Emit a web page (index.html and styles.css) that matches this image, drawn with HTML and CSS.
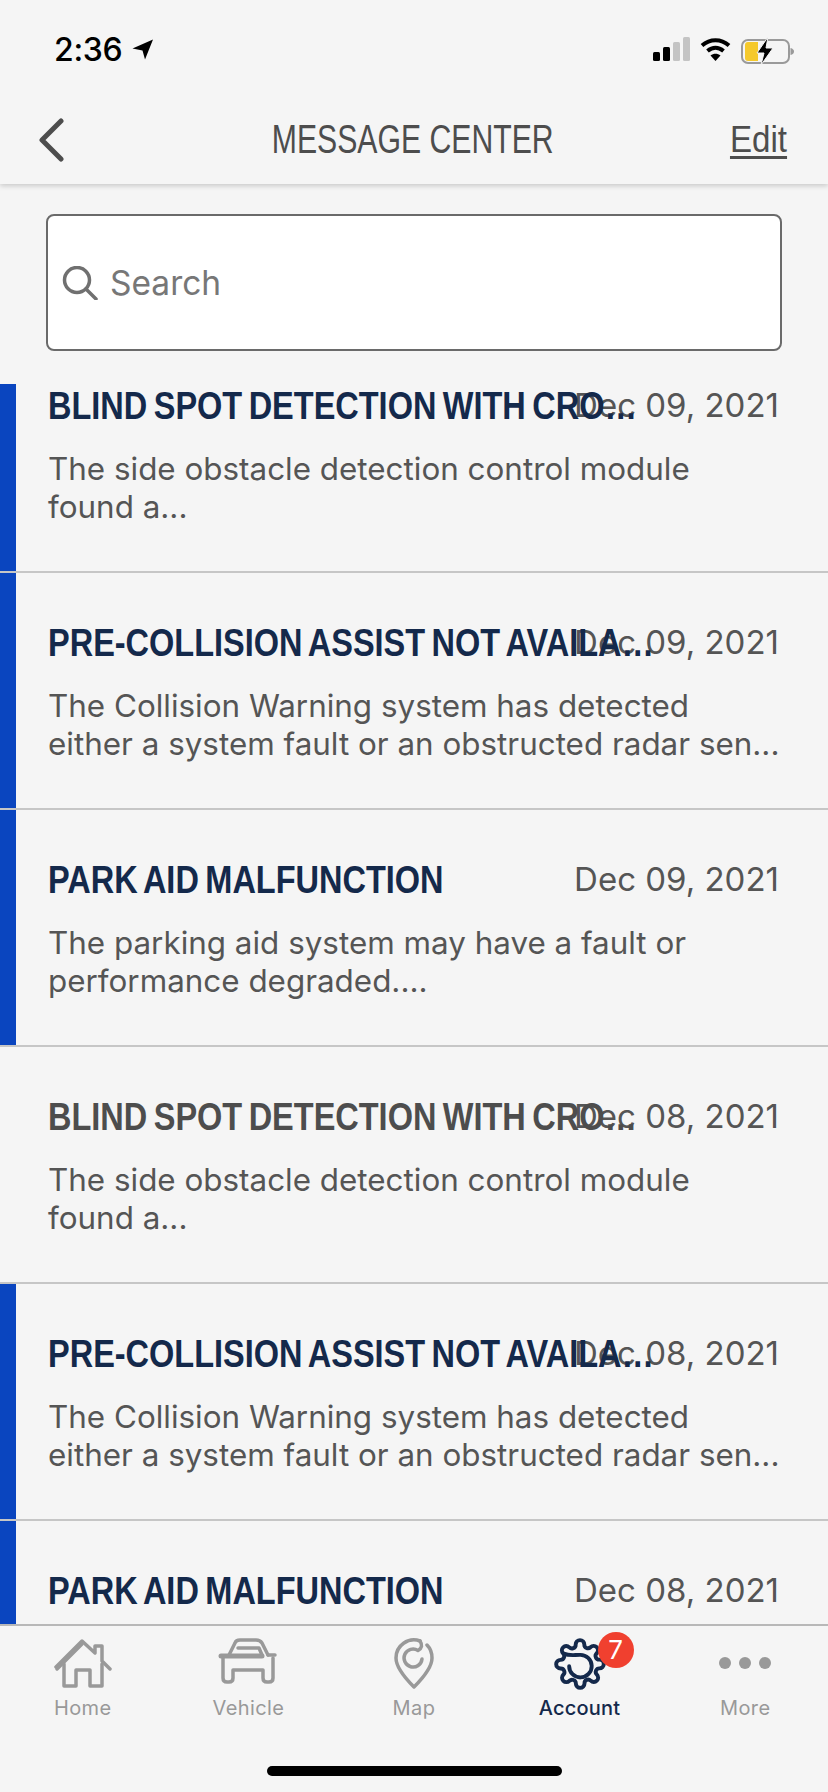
FILE: index.html
```html
<!DOCTYPE html>
<html lang="en">
<head>
  <meta charset="UTF-8" />
  <title>Message Center</title>
  <meta name="viewport" content="width=device-width, initial-scale=1.0" />
  <link rel="stylesheet" href="styles.css">
</head>
<body>
  <div class="screen">
    <div class="statusbar">
      <div class="status-left">
        <span class="clock">2:36</span>
        <svg class="location" width="22" height="21" viewBox="0 0 22 21"><path d="M21 0.5 13 20.5 10.5 11.5 0.5 9.5z" fill="#000"/></svg>
      </div>
      <div class="status-right">
        <svg width="37" height="24" viewBox="0 0 37 24">
          <rect x="0" y="15" width="7" height="9" rx="1.5" fill="#000"/>
          <rect x="10" y="10" width="7" height="14" rx="1.5" fill="#000"/>
          <rect x="20" y="5" width="7" height="19" rx="1.5" fill="#c4c4c4"/>
          <rect x="30" y="0" width="7" height="24" rx="1.5" fill="#c4c4c4"/>
        </svg>
        <svg width="31" height="24" viewBox="0 0 31 24" fill="none" stroke="#000" stroke-width="4">
          <path d="M2 8.5C10 1.5 21 1.5 29 8.5"/>
          <path d="M7.5 14C12.5 9.7 18.5 9.7 23.5 14"/>
          <path d="M15.5 24 10.5 18.5C13.5 16.3 17.5 16.3 20.5 18.5z" fill="#000" stroke="none"/>
        </svg>
        <svg width="54" height="28" viewBox="0 0 54 28">
          <rect x="1" y="3" width="47" height="23" rx="6" fill="none" stroke="#9a9a9a" stroke-width="2"/>
          <path d="M4 8Q4 5 7 5H17V24H7Q4 24 4 21z" fill="#f5c92c"/>
          <path d="M49.500 11Q53 12 53 14.500T49.500 18z" fill="#9a9a9a"/>
          <path d="M27 0 16 16H23L20 28 32 11H25z" fill="#000" stroke="#f5f5f5" stroke-width="1"/>
        </svg>
      </div>
    </div>

    <header class="navbar">
      <svg class="back" width="26" height="44" viewBox="0 0 26 44" fill="none" stroke="#4d4d4d" stroke-width="5" stroke-linecap="round" stroke-linejoin="round"><path d="M23 3 4 22 23 41"/></svg>
      <h1>MESSAGE CENTER</h1>
      <a class="edit" href="#">Edit</a>
    </header>

    <div class="search-wrap">
      <div class="search">
        <svg width="36" height="34" viewBox="0 0 36 34" fill="none" stroke="#707070" stroke-width="3.500" stroke-linecap="round"><circle cx="15" cy="14" r="12.500"/><path d="M24 23 34 33"/></svg>
        <span>Search</span>
      </div>
    </div>

    <div class="list-view">
      <ul class="messages">
        <li class="message unread">
          <div class="message-top">
            <div class="subject">BLIND SPOT DETECTION WITH CROSS TRAFFIC ALERT</div>
            <div class="date">Dec 09, 2021</div>
          </div>
          <p class="snippet">The side obstacle detection control module<br>found a...</p>
        </li>
        <li class="message unread">
          <div class="message-top">
            <div class="subject">PRE-COLLISION ASSIST NOT AVAILABLE</div>
            <div class="date">Dec 09, 2021</div>
          </div>
          <p class="snippet">The Collision Warning system has detected<br>either a system fault or an obstructed radar sen...</p>
        </li>
        <li class="message unread">
          <div class="message-top">
            <div class="subject">PARK AID MALFUNCTION</div>
            <div class="date">Dec 09, 2021</div>
          </div>
          <p class="snippet">The parking aid system may have a fault or<br>performance degraded....</p>
        </li>
        <li class="message">
          <div class="message-top">
            <div class="subject">BLIND SPOT DETECTION WITH CROSS TRAFFIC ALERT</div>
            <div class="date">Dec 08, 2021</div>
          </div>
          <p class="snippet">The side obstacle detection control module<br>found a...</p>
        </li>
        <li class="message unread">
          <div class="message-top">
            <div class="subject">PRE-COLLISION ASSIST NOT AVAILABLE</div>
            <div class="date">Dec 08, 2021</div>
          </div>
          <p class="snippet">The Collision Warning system has detected<br>either a system fault or an obstructed radar sen...</p>
        </li>
        <li class="message unread">
          <div class="message-top">
            <div class="subject">PARK AID MALFUNCTION</div>
            <div class="date">Dec 08, 2021</div>
          </div>
          <p class="snippet">The parking aid system may have a fault or<br>performance degraded....</p>
        </li>
      </ul>
    </div>

    <nav class="tabbar">
      <div class="tab">
        <div class="tab-icon">
          <svg width="58" height="50" viewBox="0 0 58 50" fill="none" stroke="#999" stroke-width="3.500" stroke-linejoin="round" stroke-linecap="round">
            <path d="M2 29 28 3 41 15V8H48V23L56 31"/>
            <path d="M3 31 28 6"/>
            <path d="M10 26V48H22V32H36V48H48V26"/>
          </svg>
        </div>
        <span>Home</span>
      </div>
      <div class="tab">
        <div class="tab-icon">
          <svg width="60" height="46" viewBox="0 0 60 46" fill="none" stroke="#999" stroke-width="3.500" stroke-linejoin="round" stroke-linecap="round">
            <path d="M11 17 17 5Q18 2 22 2H38Q42 2 44 5L50 17"/>
            <path d="M20 10H41L44 17"/>
            <path d="M3 18H44" stroke-width="5"/>
            <path d="M50 17H57"/>
            <path d="M5 20V40Q5 44 9 44H11Q15 44 15 40V32H45V40Q45 44 49 44H51Q55 44 55 40V20"/>
          </svg>
        </div>
        <span>Vehicle</span>
      </div>
      <div class="tab">
        <div class="tab-icon">
          <svg width="40" height="52" viewBox="0 0 40 52" fill="none" stroke="#999" stroke-width="3.500" stroke-linejoin="round" stroke-linecap="round">
            <path d="M26 3A18 18 0 0 0 2 20C2 30 12 41 20 49 28 41 38 30 38 20 38 14 36 10 33 7"/>
            <path d="M28 21A9 9 0 1 1 24 12.500Q30 9 26 3"/>
          </svg>
        </div>
        <span>Map</span>
      </div>
      <div class="tab active">
        <div class="tab-icon">
          <svg width="52" height="52" viewBox="0 0 24 24" fill="none" stroke="#14294b" stroke-width="1.800" stroke-linejoin="round" stroke-linecap="round">
            <path d="M19.4 15a1.65 1.65 0 0 0 .33 1.82l.06.06a2 2 0 0 1 0 2.83 2 2 0 0 1-2.83 0l-.06-.06a1.65 1.65 0 0 0-1.82-.33 1.65 1.65 0 0 0-1 1.51V21a2 2 0 0 1-2 2 2 2 0 0 1-2-2v-.09A1.65 1.65 0 0 0 9 19.4a1.65 1.65 0 0 0-1.82.33l-.06.06a2 2 0 0 1-2.83 0 2 2 0 0 1 0-2.83l.06-.06a1.65 1.65 0 0 0 .33-1.82 1.65 1.65 0 0 0-1.51-1H3a2 2 0 0 1-2-2 2 2 0 0 1 2-2h.09A1.65 1.65 0 0 0 4.600 9a1.65 1.65 0 0 0-.33-1.82l-.06-.06a2 2 0 0 1 0-2.83 2 2 0 0 1 2.83 0l.06.06a1.65 1.65 0 0 0 1.82.33H9a1.65 1.65 0 0 0 1-1.51V3a2 2 0 0 1 2-2 2 2 0 0 1 2 2v.09a1.65 1.65 0 0 0 1 1.51 1.65 1.65 0 0 0 1.82-.33l.06-.06a2 2 0 0 1 2.83 0 2 2 0 0 1 0 2.83l-.06.06a1.65 1.65 0 0 0-.33 1.82V9a1.65 1.65 0 0 0 1.51 1H21a2 2 0 0 1 2 2 2 2 0 0 1-2 2h-.09a1.65 1.65 0 0 0-1.51 1z"/>
            <path d="M7 13A5.200 5.200 0 1 0 12 7.800C9 7.800 7 8.300 4.500 7.200"/>
          </svg>
          <span class="badge">7</span>
        </div>
        <span>Account</span>
      </div>
      <div class="tab">
        <div class="tab-icon">
          <div class="dots"><i></i><i></i><i></i></div>
        </div>
        <span>More</span>
      </div>
    </nav>
    <div class="home-indicator"></div>
  </div>
</body>
</html>
```

FILE: styles.css
```css
* {
  box-sizing: border-box;
}
body {
  margin: 0;
  background-color: #f5f5f5;
  font-family: 'Inter', 'Liberation Sans', sans-serif;
  color: #555;
}
.screen {
  width: 828px;
  height: 1792px;
  display: flex;
  flex-direction: column;
  position: relative;
  overflow: hidden;
}

/* status bar */
.statusbar {
  height: 92px;
  padding: 34px 33px 0 54px;
  display: flex;
  justify-content: space-between;
  align-items: flex-start;
}
.status-left {
  display: flex;
  align-items: center;
  gap: 10px;
  height: 30px;
}
.clock {
  font-size: 32px;
  font-weight: 500;
  color: #000;
  letter-spacing: -0.3px;
}
.status-right {
  display: flex;
  align-items: flex-start;
  gap: 10px;
  padding-top: 3px;
}

/* nav */
.navbar {
  height: 92px;
  padding: 0 41px 0 38px;
  display: grid;
  grid-template-columns: 1fr auto 1fr;
  align-items: center;
  box-shadow: 0 2px 5px rgba(0,0,0,0.18);
  clip-path: inset(0 0 -12px 0);
  position: relative;
}
.back {
  margin-top: 3px;
}
/* the app's condensed face isn't installed, so Liberation Sans gets squeezed */
.navbar h1 {
  margin: 3px 0 0;
  font-family: 'Liberation Sans', sans-serif;
  font-size: 40px;
  font-weight: 400;
  color: #4d4d4d;
  transform: scaleX(0.755);
}
.edit {
  justify-self: end;
  font-family: 'Liberation Sans', sans-serif;
  font-size: 36px;
  color: #4d4d4d;
  text-underline-offset: 4px;
  margin-top: 4px;
  transform: scaleX(0.92);
  transform-origin: right;
}

/* search */
.search-wrap {
  padding: 30px 46px 33px 46px;
}
.search {
  height: 137px;
  background: #fff;
  border: 2px solid #6a6a6a;
  border-radius: 8px;
  padding-left: 14px;
  display: flex;
  align-items: center;
  gap: 12px;
  font-size: 33.5px;
  color: #777;
}

/* messages */
.list-view {
  flex: 1;
  min-height: 0;
  overflow: hidden;
}
.messages {
  list-style: none;
  margin: -48px 0 0;
  padding: 0;
}
.message {
  height: 237px;
  padding: 46px 49px 0 48px;
  border-bottom: 2px solid #c6c6c6;
}
.message.unread {
  box-shadow: inset 16px 0 0 #0a45bf;
}
.message-top {
  display: grid;
  height: 48px;
}
.subject,
.date {
  grid-area: 1 / 1;
  line-height: 48px;
}
.subject {
  width: 712px;
  font-family: 'Liberation Sans', sans-serif;
  font-size: 38px;
  font-weight: 700;
  word-spacing: -3px;
  color: #4d4d4d;
  white-space: nowrap;
  overflow: hidden;
  text-overflow: ellipsis;
  transform: scaleX(0.855);
  transform-origin: left;
}
.unread .subject {
  color: #14294b;
}
.date {
  justify-self: end;
  font-size: 33px;
  margin-top: -1px;
}
.snippet {
  margin: 20px 0 0;
  font-size: 31.4px;
  line-height: 38px;
  white-space: nowrap;
}

/* tabs */
.tabbar {
  height: 168px;
  flex: none;
  border-top: 2px solid #b8b8b8;
  background-color: #f5f5f5;
  display: grid;
  grid-template-columns: repeat(5, 1fr);
  align-items: start;
  position: relative;
}
.tab {
  display: flex;
  flex-direction: column;
  align-items: center;
  font-size: 20px;
  color: #999;
  letter-spacing: 0.4px;
}
.tab.active {
  color: #14294b;
  font-weight: 500;
  letter-spacing: 0.2px;
}
.tab-icon {
  height: 70px;
  padding-top: 12px;
  position: relative;
}
.badge {
  position: absolute;
  top: 6px;
  left: 44px;
  width: 36px;
  height: 36px;
  border-radius: 50%;
  background-color: #f0402f;
  color: #fff;
  font-size: 26px;
  font-weight: 400;
  letter-spacing: 0;
  text-align: center;
  line-height: 36px;
}
.dots {
  display: flex;
  gap: 8px;
  padding-top: 19px;
}
.dots i {
  width: 12px;
  height: 12px;
  border-radius: 50%;
  background-color: #999;
}
.home-indicator {
  position: absolute;
  left: 267px;
  bottom: 16px;
  width: 295px;
  height: 10px;
  border-radius: 5px;
  background-color: #000;
}
```
